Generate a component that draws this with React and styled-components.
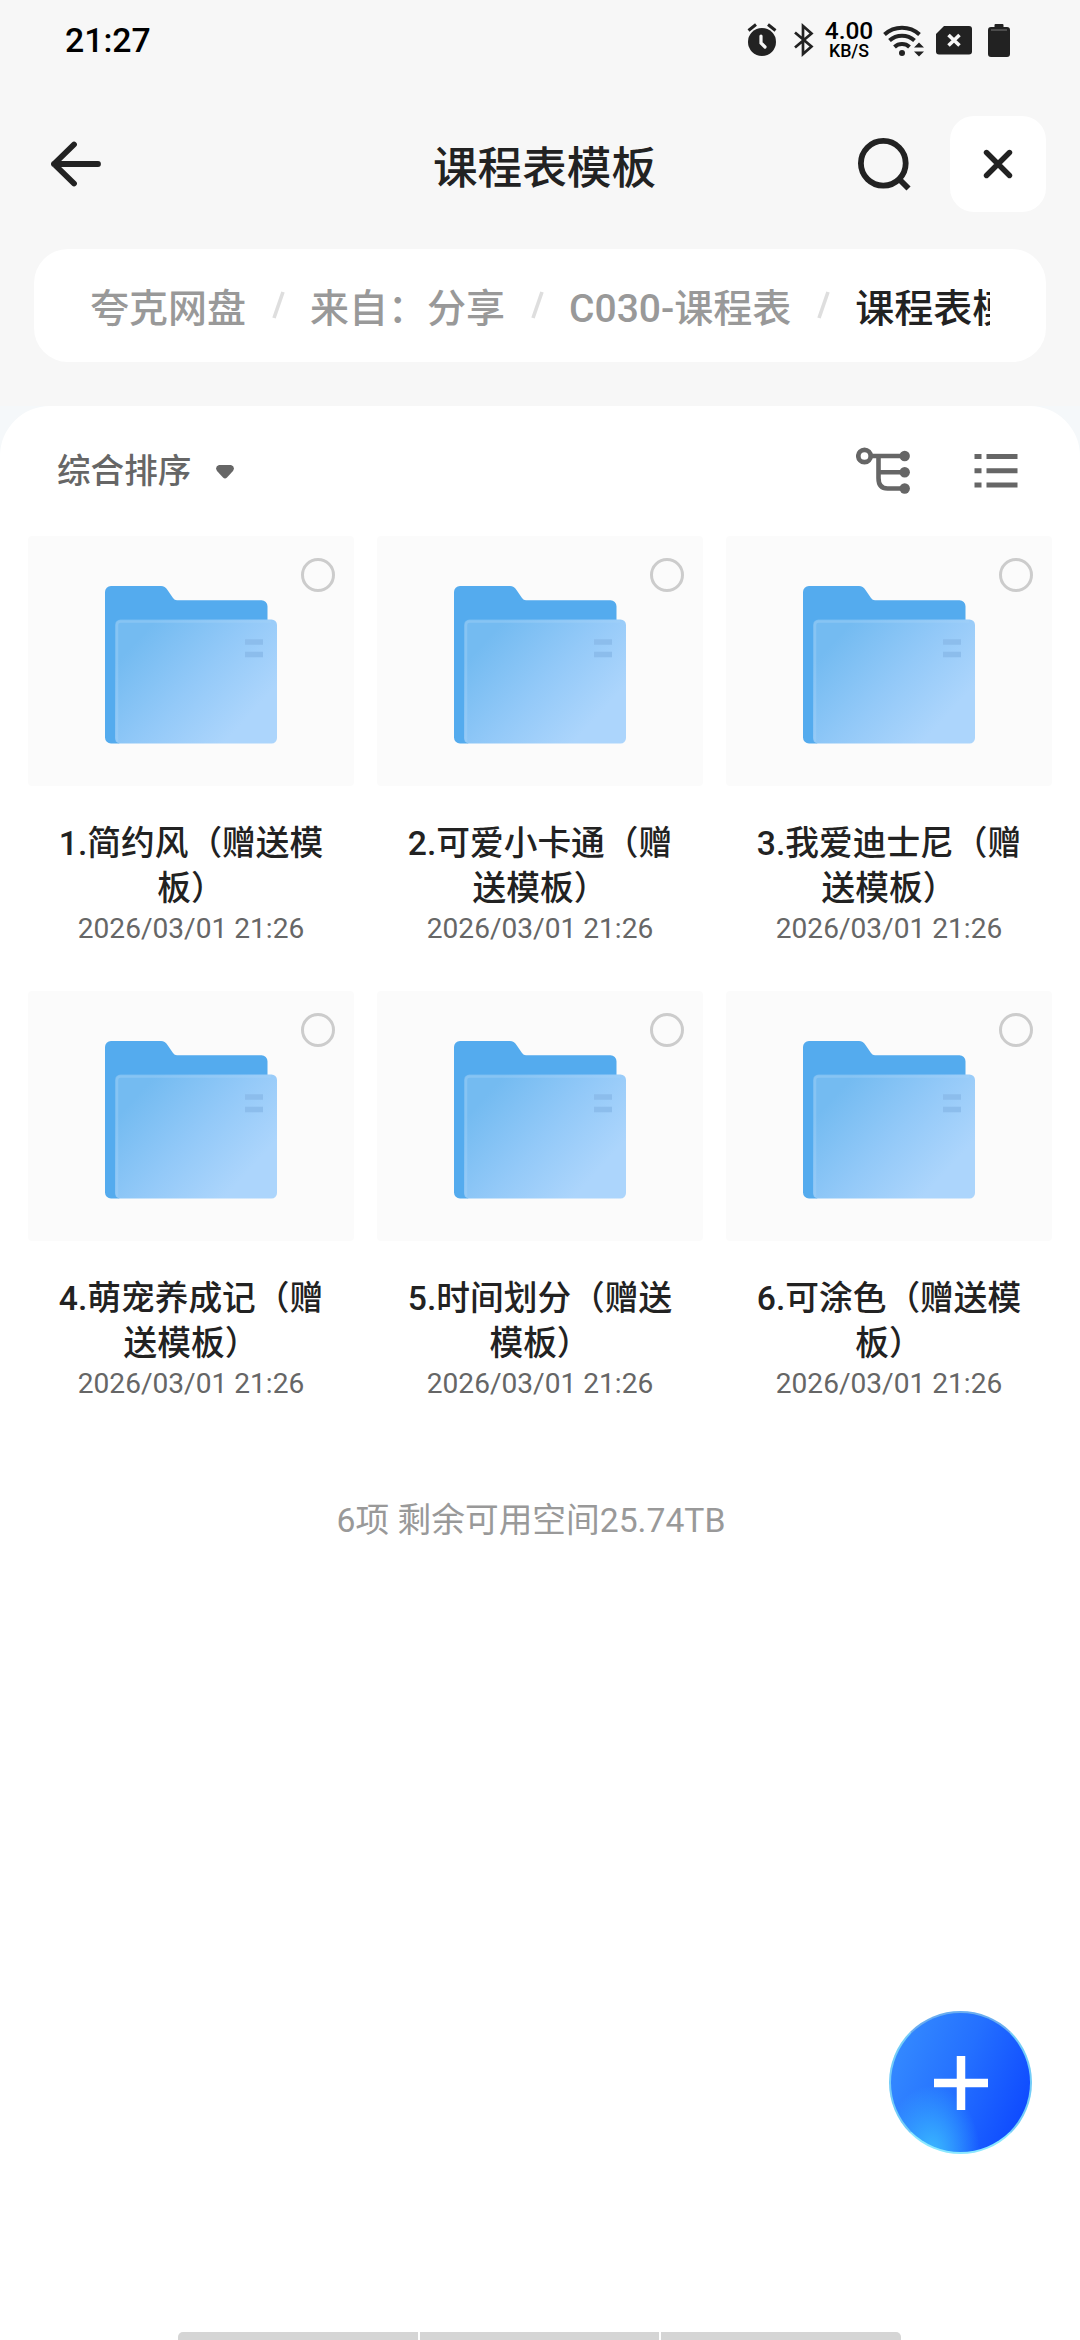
import React, { useState } from 'react'
import styled, { createGlobalStyle } from 'styled-components'

const GlobalStyle = createGlobalStyle`
  * {
    box-sizing: border-box;
  }
  body {
    margin: 0;
    background: #ffffff;
    font-family: Roboto, 'Noto Sans CJK SC', sans-serif;
  }
`

const Screen = styled.div`
  position: relative;
  display: flex;
  flex-direction: column;
  width: 1080px;
  height: 2340px;
  overflow: hidden;
  background: #f7f7f7;
  color: #222222;
`

const StatusBar = styled.div`
  display: flex;
  align-items: center;
  justify-content: space-between;
  height: 80px;
  padding: 0 70px 0 65px;
  color: #000000;
`
const Clock = styled.span`
  font-size: 33.8px;
  font-weight: 500;
  line-height: 40px;
  padding-top: 2px;
`
const StatusIcons = styled.div`
  display: flex;
  align-items: center;
`
const StatusIcon = styled.svg`
  display: block;
  flex: none;
  margin-right: ${(p) => p.$gap || 0}px;
`
const NetSpeed = styled.div`
  width: 50px;
  margin-right: 9px;
  padding-top: 1px;
  text-align: center;
  font-weight: 500;
`
const SpeedValue = styled.div`
  font-size: 24.5px;
  line-height: 20px;
`
const SpeedUnit = styled.div`
  font-size: 17.8px;
  line-height: 19px;
`

const NavBar = styled.header`
  display: grid;
  grid-template-columns: 189px 1fr 196px;
  align-items: center;
  height: 169px;
  padding: 0 34px 1px 50px;
`
const Title = styled.h1`
  margin: 0;
  padding-top: 9px;
  font-size: 44.6px;
  font-weight: 500;
  line-height: 60px;
  text-align: center;
`
const NavActions = styled.div`
  display: flex;
  align-items: center;
  justify-content: space-between;
`
const IconButton = styled.button`
  display: flex;
  align-items: center;
  justify-content: center;
  width: ${(p) => p.$size}px;
  height: ${(p) => p.$size}px;
  padding: 0;
  border: none;
  border-radius: 24px;
  background: ${(p) => p.$bg || 'transparent'};
  cursor: pointer;
`

const Crumbs = styled.nav`
  margin: 0 34px 44px;
  height: 113px;
  padding: 0 56px;
  border-radius: 34px;
  background: #ffffff;
`
const CrumbTrack = styled.div`
  display: flex;
  align-items: center;
  height: 100%;
  padding-top: 7px;
  overflow: hidden;
  white-space: nowrap;
`
const Crumb = styled.span`
  flex: none;
  font-size: 39px;
  line-height: 56px;
  font-weight: 500;
  color: ${(p) => (p.$current ? '#222222' : '#999999')};
`
const Slash = styled.svg`
  flex: none;
  margin: -8px 25px 0 26px;
`

const PanelWrap = styled.div`
  flex: 1;
  display: flex;
  background: #f5f8fa;
`
const Panel = styled.main`
  flex: 1;
  display: flex;
  flex-direction: column;
  padding: 0 28px;
  border-radius: 50px 50px 0 0;
  background: #ffffff;
`
const Toolbar = styled.div`
  display: flex;
  align-items: center;
  justify-content: space-between;
  height: 130px;
  padding: 0 34px 0 29px;
`
const SortButton = styled.button`
  display: flex;
  align-items: center;
  gap: 25px;
  padding: 2px 0 0;
  border: none;
  background: transparent;
  color: #666666;
  font: 500 33.6px/48px Roboto, 'Noto Sans CJK SC', sans-serif;
`
const ToolIcons = styled.div`
  display: flex;
  align-items: center;
  gap: 64px;
`

const Grid = styled.div`
  display: grid;
  grid-template-columns: repeat(3, 326px);
  column-gap: 23px;
  grid-auto-rows: 455px;
`
const Item = styled.div`
  display: flex;
  flex-direction: column;
  align-items: center;
`
const Thumb = styled.div`
  position: relative;
  display: flex;
  justify-content: center;
  width: 100%;
  height: 250px;
  padding-top: 50px;
  border-radius: 4px;
  background: #fbfbfb;
`
const Check = styled.span`
  position: absolute;
  top: 22px;
  right: 19px;
  width: 34px;
  height: 34px;
  border: 3px solid ${(p) => (p.$on ? '#2b7bff' : '#cccccc')};
  border-radius: 50%;
`
const FileName = styled.div`
  width: 288px;
  margin-top: 35px;
  font-size: 33.7px;
  font-weight: 500;
  line-height: 45px;
  text-align: center;
`
const FileDate = styled.div`
  margin-top: 0;
  font-size: 28.1px;
  line-height: 36px;
  color: #666666;
`
const Summary = styled.div`
  margin: 51px 18px 0 0;
  font-size: 33.7px;
  line-height: 48px;
  text-align: center;
  color: #999999;
`

const AddButton = styled.button`
  position: absolute;
  left: 889px;
  top: 2011px;
  display: flex;
  align-items: center;
  justify-content: center;
  width: 143px;
  height: 143px;
  padding: 0;
  border: 2.5px solid #74cdf8;
  border-top-color: #6aaef0;
  border-bottom-color: #8be8ff;
  border-radius: 50%;
  background:
    radial-gradient(ellipse at 30% 100%, #3abaff 0%, rgba(58, 186, 255, 0) 34%),
    linear-gradient(112deg, #3388ff 12%, #2470ff 48%, #0f4bff 88%);
  background-origin: border-box;
`
const HomeBar = styled.div`
  display: flex;
  gap: 2px;
  width: 723px;
  height: 8px;
  margin: auto auto 0 150px;
  border-radius: 5px 5px 0 0;
  overflow: hidden;
`
const HomeSegment = styled.span`
  flex: 1;
  background: #d5d5d5;
`

const AlarmIcon = () => (
  <StatusIcon width="30" height="34" viewBox="0 0 30 34" $gap={17}>
    <circle cx="15" cy="19" r="14" fill="#222" />
    <path d="M1.5 7.5 9 1.5M21 1.5 28.5 7.5" stroke="#222" strokeWidth="3" />
    <path
      d="M14 13v7l4 4"
      fill="none"
      stroke="#f7f7f7"
      strokeWidth="3.2"
      strokeLinecap="round"
    />
  </StatusIcon>
)

const BluetoothIcon = () => (
  <StatusIcon width="20" height="34" viewBox="0 0 20 34" $gap={10}>
    <path
      d="M1 9.5 17.5 23.5 9 31V3l8.5 7.5L1 24.5"
      fill="none"
      stroke="#222"
      strokeWidth="2.7"
    />
  </StatusIcon>
)

const WifiIcon = () => (
  <StatusIcon width="42" height="34" viewBox="0 0 42 34" $gap={11}>
    <g fill="none" stroke="#222" strokeWidth="4">
      <path d="M1.5 11.5a26 26 0 0 1 35 0" />
      <path d="M6.5 17.5a18.5 18.5 0 0 1 25 0" />
      <path d="M11.5 24a11 11 0 0 1 15 0" />
    </g>
    <circle cx="19" cy="30" r="3" fill="#222" />
    <path d="M31 24.5 36 19.5l5 5zM31 28.5l5 5 5-5z" fill="#222" />
  </StatusIcon>
)

const SimIcon = () => (
  <StatusIcon width="36" height="29" viewBox="0 0 36 29" $gap={16}>
    <path
      d="M8 0h25a3 3 0 0 1 3 3v22.5a3 3 0 0 1-3 3H3a3 3 0 0 1-3-3V8z"
      fill="#222"
    />
    <path d="m12.500 9 11 10.500M23.500 9l-11 10.500" stroke="#f7f7f7" strokeWidth="3.6" />
  </StatusIcon>
)

const BatteryIcon = () => (
  <StatusIcon width="22" height="33" viewBox="0 0 22 33">
    <path
      d="M6.5 3V1q0-1 1-1h7q1 0 1 1v2H19a3 3 0 0 1 3 3v24a3 3 0 0 1-3 3H3a3 3 0 0 1-3-3V6a3 3 0 0 1 3-3z"
      fill="#222"
    />
    <path d="M3 6h16" stroke="#777" strokeWidth="1" />
  </StatusIcon>
)

const BackIcon = () => (
  <svg width="52" height="48" viewBox="0 0 52 48">
    <path
      d="M24 4.5 4 24l20 19.5M4 24h44"
      fill="none"
      stroke="#222"
      strokeWidth="5.8"
      strokeLinecap="round"
      strokeLinejoin="round"
    />
  </svg>
)

const SearchIcon = () => (
  <svg width="54" height="54" viewBox="0 0 54 54">
    <g fill="none" stroke="#222" strokeWidth="5.8">
      <circle cx="26.3" cy="26.3" r="22.4" />
      <path d="m42 42 9.500 9.500" />
    </g>
  </svg>
)

const CloseIcon = () => (
  <svg width="30" height="30" viewBox="0 0 30 30">
    <path
      d="m3.500 3.500 23 23m0-23-23 23"
      stroke="#222"
      strokeWidth="5.4"
      strokeLinecap="round"
    />
  </svg>
)

const TreeIcon = () => (
  <svg width="54" height="48" viewBox="0 0 54 48">
    <g fill="none" stroke="#666" strokeWidth="4.6">
      <circle cx="8.5" cy="9" r="6.2" strokeWidth="4.7" />
      <path d="M15 9h34M22.5 9v22q0 10.5 9 10.5H49M22.5 25.2H49" />
    </g>
    <g fill="#666">
      <circle cx="48.7" cy="9" r="5.2" />
      <circle cx="48.7" cy="25.2" r="5.2" />
      <circle cx="48.7" cy="41.5" r="5.2" />
    </g>
  </svg>
)

const ListIcon = () => (
  <svg width="44" height="36" viewBox="0 0 44 36">
    <path
      d="M.5 3.5h7M12.5 3.5h31M.5 17.8h7M12.5 17.8h31M.5 32h7M12.5 32h31"
      stroke="#666"
      strokeWidth="5"
    />
  </svg>
)

const FolderIcon = ({ id }) => (
  <svg width="172" height="158" viewBox="0 0 172 158">
    <defs>
      <linearGradient id={id} x1="0" y1="0.15" x2="1" y2="0.85">
        <stop offset="0.1" stopColor="#74bbf1" />
        <stop offset="0.5" stopColor="#93c9f8" />
        <stop offset="0.85" stopColor="#acd5fc" />
      </linearGradient>
    </defs>
    <path
      d="M6 0h50q4 0 6.5 4l5.500 8q1.500 2.300 4 2.300h84.500a6 6 0 0 1 6 6V60L14 157.500H6a6 6 0 0 1-6-6V6a6 6 0 0 1 6-6z"
      fill="#54abee"
    />
    <rect x="10" y="33.5" width="162" height="124" rx="5.5" fill={`url(#${id})`} />
    <path
      d="M12 156V39q0-3.500 3.500-3.500H166"
      fill="none"
      stroke="#a5d3f8"
      strokeWidth="2.5"
      opacity="0.4"
    />
    <path d="M140 56h18M140 68.500h18" stroke="#8cbdec" strokeWidth="5.5" />
  </svg>
)

const crumbs = ['夸克网盘', '来自：分享', 'C030-课程表', '课程表模板']

const folders = [
  { id: 1, name: '1.简约风（赠送模板）', date: '2026/03/01 21:26' },
  { id: 2, name: '2.可爱小卡通（赠送模板）', date: '2026/03/01 21:26' },
  { id: 3, name: '3.我爱迪士尼（赠送模板）', date: '2026/03/01 21:26' },
  { id: 4, name: '4.萌宠养成记（赠送模板）', date: '2026/03/01 21:26' },
  { id: 5, name: '5.时间划分（赠送模板）', date: '2026/03/01 21:26' },
  { id: 6, name: '6.可涂色（赠送模板）', date: '2026/03/01 21:26' },
]

const App = () => {
  const [selected, setSelected] = useState([])

  const toggle = (id) => {
    setSelected((prev) =>
      prev.includes(id) ? prev.filter((x) => x !== id) : [...prev, id]
    )
  }

  return (
    <>
      <GlobalStyle />
      <Screen lang="zh-CN">
        <StatusBar>
          <Clock>21:27</Clock>
          <StatusIcons>
            <AlarmIcon />
            <BluetoothIcon />
            <NetSpeed>
              <SpeedValue>4.00</SpeedValue>
              <SpeedUnit>KB/S</SpeedUnit>
            </NetSpeed>
            <WifiIcon />
            <SimIcon />
            <BatteryIcon />
          </StatusIcons>
        </StatusBar>

        <NavBar>
          <IconButton $size={52}>
            <BackIcon />
          </IconButton>
          <Title>课程表模板</Title>
          <NavActions>
            <IconButton $size={68}>
              <SearchIcon />
            </IconButton>
            <IconButton $size={96} $bg="#ffffff">
              <CloseIcon />
            </IconButton>
          </NavActions>
        </NavBar>

        <Crumbs>
          <CrumbTrack>
            {crumbs.map((name, i) => (
              <React.Fragment key={name}>
                {i > 0 && (
                  <Slash width="13" height="28" viewBox="0 0 13 28">
                    <path d="M11 1 2 27" stroke="#dedede" strokeWidth="3.6" />
                  </Slash>
                )}
                <Crumb $current={i === crumbs.length - 1}>{name}</Crumb>
              </React.Fragment>
            ))}
          </CrumbTrack>
        </Crumbs>

        <PanelWrap>
          <Panel>
            <Toolbar>
              <SortButton>
                综合排序
                <svg width="18" height="14" viewBox="0 0 18 14">
                  <path
                    d="M3 0h12q4.500 1.500 2 6l-6 6.500q-2 2-4 0L1 6Q-1.500 1.500 3 0z"
                    fill="#666"
                  />
                </svg>
              </SortButton>
              <ToolIcons>
                <TreeIcon />
                <ListIcon />
              </ToolIcons>
            </Toolbar>

            <Grid>
              {folders.map((item) => (
                <Item key={item.id} onClick={() => toggle(item.id)}>
                  <Thumb>
                    <FolderIcon id={`folder-${item.id}`} />
                    <Check $on={selected.includes(item.id)} />
                  </Thumb>
                  <FileName>{item.name}</FileName>
                  <FileDate>{item.date}</FileDate>
                </Item>
              ))}
            </Grid>

            <Summary>6项 剩余可用空间25.74TB</Summary>

            <HomeBar>
              <HomeSegment />
              <HomeSegment />
              <HomeSegment />
            </HomeBar>
          </Panel>
        </PanelWrap>

        <AddButton aria-label="添加">
          <svg width="54" height="54" viewBox="0 0 54 54">
            <path d="M0 27h54M27 0v54" stroke="#fff" strokeWidth="8.5" />
          </svg>
        </AddButton>
      </Screen>
    </>
  )
}

export default App
